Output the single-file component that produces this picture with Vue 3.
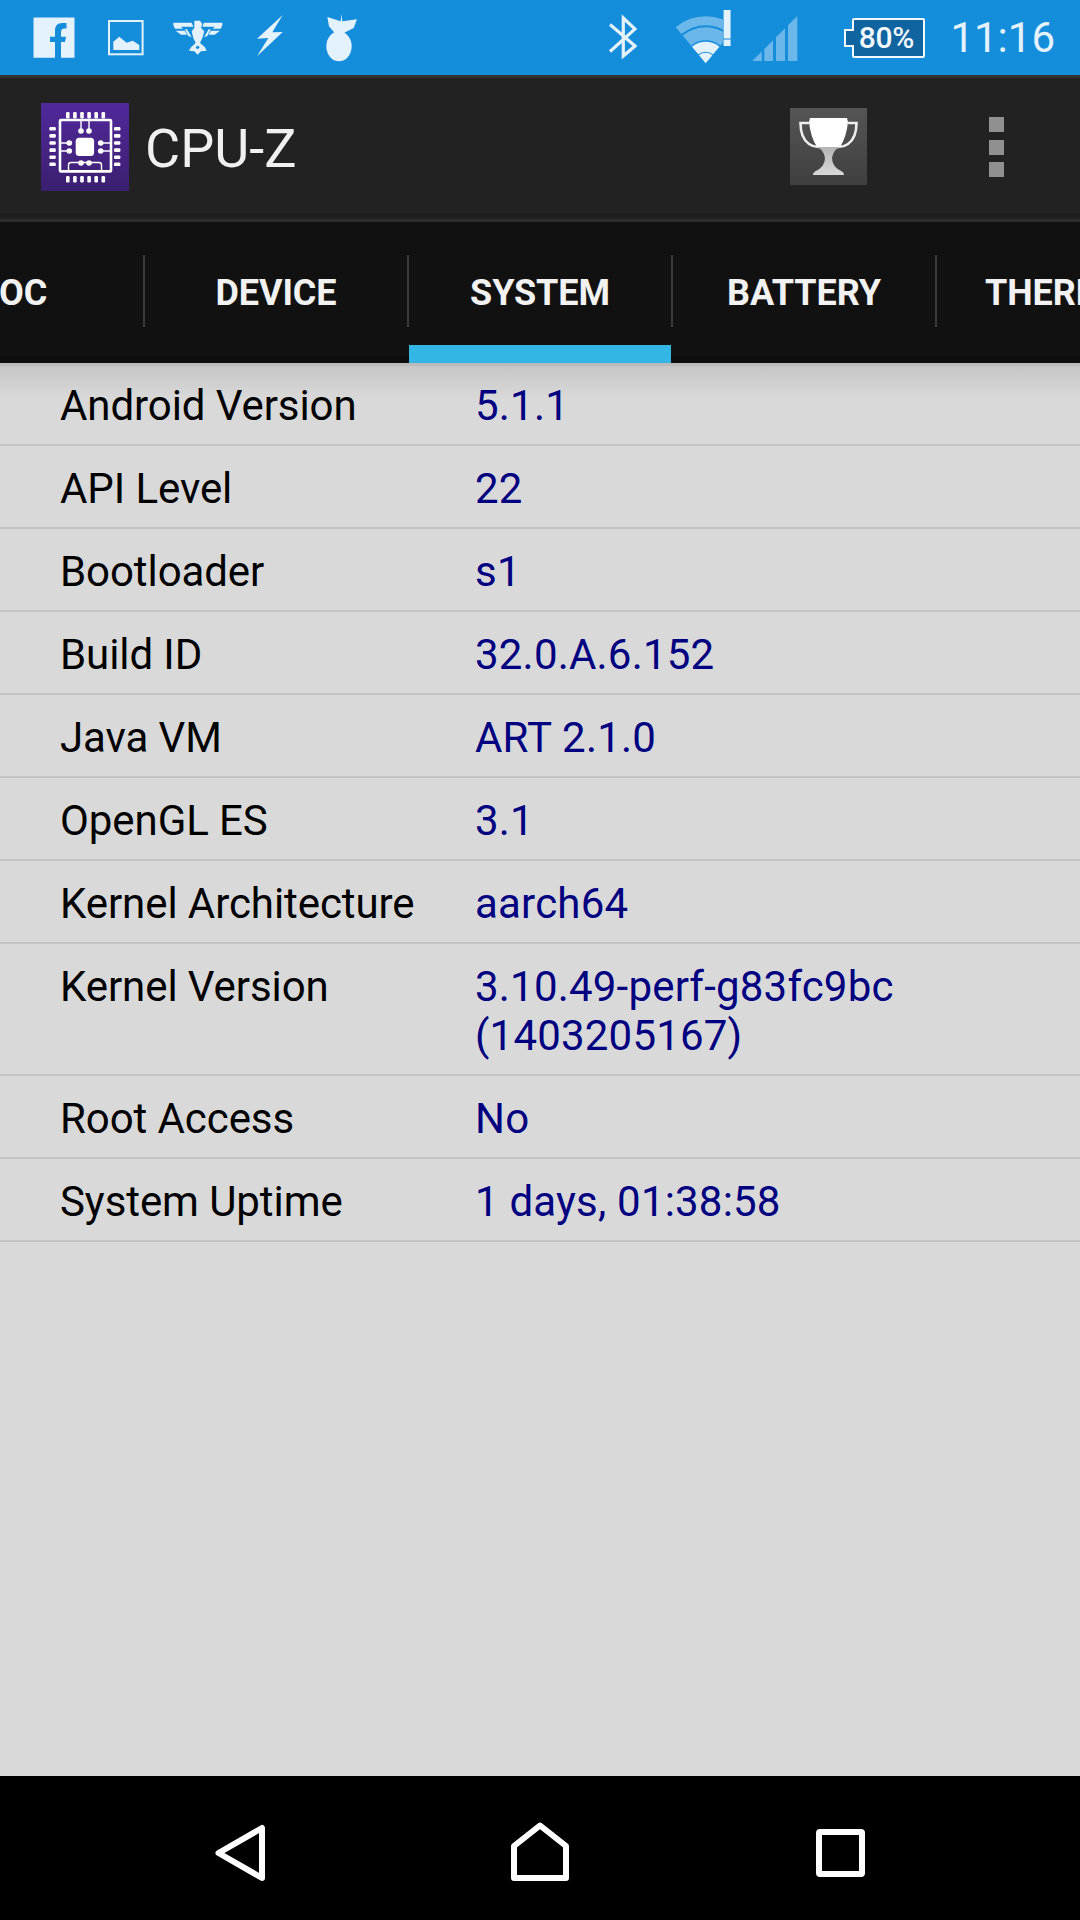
<script setup>
const rows = [
  ['Android Version', '5.1.1'],
  ['API Level', '22'],
  ['Bootloader', 's1'],
  ['Build ID', '32.0.A.6.152'],
  ['Java VM', 'ART 2.1.0'],
  ['OpenGL ES', '3.1'],
  ['Kernel Architecture', 'aarch64'],
  ['Kernel Version', '3.10.49-perf-g83fc9bc (1403205167)'],
  ['Root Access', 'No'],
  ['System Uptime', '1 days, 01:38:58']
]
const tabs = ['SOC', 'DEVICE', 'SYSTEM', 'BATTERY', 'THERMAL']

const cx = 706.7
const cy = 63.3
const half = (39.6 * Math.PI) / 180
function sector(r1, r2) {
  const pt = (r, a) => `${(cx + r * Math.sin(a)).toFixed(2)} ${(cy - r * Math.cos(a)).toFixed(2)}`
  if (r1 === 0) return `M${cx} ${cy}L${pt(r2, -half)}A${r2} ${r2} 0 0 1 ${pt(r2, half)}Z`
  return `M${pt(r1, -half)}L${pt(r2, -half)}A${r2} ${r2} 0 0 1 ${pt(r2, half)}L${pt(r1, half)}A${r1} ${r1} 0 0 0 ${pt(r1, -half)}Z`
}
const wifiDim = [sector(38, 47), sector(23, 36)]
const wifiLit = [sector(11.6, 21.6), sector(0, 10.6)]

const pins = [0, 1, 2, 3, 4, 5]
</script>

<template>
  <div class="phone">
    <div class="status">
      <div class="status-left">
        <svg class="i-fb" viewBox="33 0 42 75"><path fill="#e3f2fd" fill-rule="evenodd" d="M33.5 17.5H74.5V57.7H33.5ZM55 57.7H61V42H65L66 36.7H61V32Q61 28.5 64.5 28.5H66.5V23H62Q55 23 55 31V36.7H50V42H55Z" /></svg>
        <svg class="i-img" viewBox="108 0 36 75"><rect x="109" y="21" width="33.6" height="33.3" fill="none" stroke="#e3f2fd" stroke-width="2" /><path fill="#e3f2fd" d="M113.3 50V41.7L119.3 36.7L126.7 42.7L132.7 40.7L139.3 45V50Z" /></svg>
        <svg class="i-eagle" viewBox="172 0 51 75">
          <g transform="translate(165 8) scale(.33333)" fill="#e3f2fd">
            <path d="M88 38H105L112 48L108 60L118 70L112 90L105 105L120 118L125 128L108 130L98 140L88 130L72 128L78 118L92 105L85 90L80 70L88 60Z" />
            <path d="M25 44H80L85 56H48L54 62H30L25 52ZM32 68H60L66 80H48ZM60 64L66 64L80 88L70 84Z" />
            <path transform="translate(197 0) scale(-1 1)" d="M25 44H80L85 56H48L54 62H30L25 52ZM32 68H60L66 80H48ZM60 64L66 64L80 88L70 84Z" />
            <circle cx="98" cy="118" r="5" fill="#148ddb" />
          </g>
        </svg>
        <svg class="i-bolt" viewBox="256 0 28 75"><path fill="#e3f2fd" d="M282.7 15L257 38.7L268.3 38L257 56.3L282.7 32L272.3 32.3Z" /></svg>
        <svg class="i-bomb" viewBox="326 0 32 75">
          <g transform="translate(165 8) scale(.33333)" fill="#e3f2fd">
            <ellipse cx="522" cy="115" rx="38" ry="45" />
            <path d="M487 27L527 40L529 18L532 40L576 34L566 60L535 76H510L492 55Z" />
          </g>
        </svg>
      </div>
      <div class="status-right">
        <svg class="i-bt" viewBox="610 0 28 75"><path fill="none" stroke="#e3f2fd" stroke-width="3.2" d="M611 24.5L636 46L624.3 56V18L636 29L611 51.5" /></svg>
        <svg class="i-wifi" viewBox="677 0 46.6 75">
          <path v-for="d in wifiDim" :key="d" :d="d" fill="#6bb7ea" />
          <path v-for="d in wifiLit" :key="d" :d="d" fill="#e3f2fd" />
        </svg>
        <svg class="i-excl" viewBox="724 0 8 75"><path fill="#e3f2fd" d="M724.6 10H731.6V38.5H724.6ZM724.6 39.5H731.6V46H724.6Z" /></svg>
        <svg class="i-signal" viewBox="753 0 46 75"><path fill="#6bb7ea" d="M753.3 61L762.7 51.6V61ZM765.3 49L774 40.3V61H765.3ZM777 37.3L786 28.3V61H777ZM789 25.3L798.3 16V61H789Z" /></svg>
        <div class="battery"><span class="battery-nub"></span><span class="battery-text">80%</span></div>
        <span class="clock">11:16</span>
      </div>
    </div>

    <header class="appbar">
      <svg class="logo" viewBox="0 0 88 88">
        <defs>
          <linearGradient id="logoBg" x1="0" y1="0" x2="0" y2="1"><stop offset="0" stop-color="#51299b" /><stop offset="1" stop-color="#3b1f70" /></linearGradient>
        </defs>
        <rect width="88" height="88" fill="url(#logoBg)" />
        <g fill="#fff">
          <template v-for="p in pins" :key="p">
            <rect :x="25 + p * 7.1" y="9" width="3.6" height="6.4" rx="1.2" />
            <rect :x="25 + p * 7.1" y="73" width="3.6" height="6.4" rx="1.2" />
            <rect x="8.4" :y="24 + p * 7.1" width="6.4" height="3.6" rx="1.2" />
            <rect x="73" :y="24 + p * 7.1" width="6.4" height="3.6" rx="1.2" />
          </template>
          <rect x="34.7" y="34.7" width="18.4" height="18.4" rx="3.5" />
          <circle cx="40" cy="28" r="2.8" /><circle cx="48" cy="28" r="2.8" />
          <circle cx="40" cy="60" r="2.8" /><circle cx="48" cy="60" r="2.8" />
          <circle cx="28.3" cy="40" r="2.8" /><circle cx="28.3" cy="48" r="2.8" />
          <circle cx="59.7" cy="40" r="2.8" /><circle cx="59.7" cy="48" r="2.8" />
        </g>
        <g fill="none" stroke="#fff" stroke-width="1.4">
          <path d="M40 17V28M48 17V28M19 40H28M19 48H28M60 40H70M60 48H70" />
          <path d="M27.5 68V62Q27.5 59.5 30 59.5H58Q60.5 59.5 60.5 62V68" />
        </g>
        <rect x="19" y="17" width="51" height="51.4" rx="1" fill="none" stroke="#fff" stroke-width="2.6" />
      </svg>
      <span class="title">CPU-Z</span>
      <svg class="trophy" viewBox="0 0 77 77">
        <defs>
          <linearGradient id="trophyBg" x1="0" y1="0" x2="0" y2="1"><stop offset="0" stop-color="#555" /><stop offset="1" stop-color="#3f3f3f" /></linearGradient>
          <linearGradient id="trophyFoot" x1="0" y1="0" x2="0" y2="1"><stop offset="0" stop-color="#b4b4b4" /><stop offset="1" stop-color="#d8d8d8" /></linearGradient>
        </defs>
        <rect width="77" height="77" fill="url(#trophyBg)" />
        <path fill="none" stroke="#eee" stroke-width="2.6" d="M19 15H10.5Q10.5 30 19 36Q24 39.5 30 39M58 15H66.5Q66.5 30 58 36Q53 39.5 47 39" />
        <path fill="#fff" d="M20 10H57L58 14Q56.5 29 50 39H27Q20.5 29 19 14Z" />
        <path fill="url(#trophyFoot)" d="M27 39H50Q43 42 42 50Q42 59 52 63.5Q54.5 65 54 67H23Q22.5 65 25 63.5Q35 59 35 50Q34 42 27 39Z" />
      </svg>
      <div class="dots"><i></i><i></i><i></i></div>
    </header>

    <nav class="tabs">
      <div v-for="t in tabs" :key="t" class="tab" :class="{ active: t === 'SYSTEM' }">{{ t }}</div>
    </nav>

    <main class="list">
      <div v-for="r in rows" :key="r[0]" class="row">
        <span class="label">{{ r[0] }}</span>
        <span class="value">{{ r[1] }}</span>
      </div>
    </main>

    <footer class="navbar">
      <svg class="n-back" viewBox="212 1776 56 144"><path fill="none" stroke="#fff" stroke-width="6" stroke-linejoin="round" d="M218.5 1853L262 1828V1878Z" /></svg>
      <svg class="n-home" viewBox="508 1776 64 144"><path fill="none" stroke="#fff" stroke-width="6" stroke-linejoin="round" d="M514 1878V1846L540 1825.5L566 1846V1878Z" /></svg>
      <svg class="n-recent" viewBox="812 1776 56 144"><rect x="819" y="1832" width="43" height="42" rx="1" fill="none" stroke="#fff" stroke-width="6" /></svg>
    </footer>
  </div>
</template>

<style scoped>
.phone {
  width: 1080px;
  height: 1920px;
  display: flex;
  flex-direction: column;
  overflow: hidden;
  background: #d9d9d9;
  font-family: Roboto, "Liberation Sans", sans-serif;
}
svg {
  display: block;
  flex: none;
}

/* status bar */
.status {
  height: 75px;
  flex: none;
  display: flex;
  justify-content: space-between;
  background: #148ddb;
}
.status-left,
.status-right {
  display: flex;
  align-items: center;
}
.status-left {
  padding-left: 33px;
}
.status-right {
  padding-right: 25px;
}
.status svg {
  height: 75px;
}
.i-fb { width: 42px; }
.i-img { width: 36px; margin-left: 33px; }
.i-eagle { width: 51px; margin-left: 28px; }
.i-bolt { width: 28px; margin-left: 33px; }
.i-bomb { width: 32px; margin-left: 42px; }
.i-bt { width: 28px; }
.i-wifi { width: 46.6px; margin-left: 39px; }
.i-excl { width: 8px; margin-left: 0.4px; }
.i-signal { width: 46px; margin-left: 21px; }
.battery {
  position: relative;
  box-sizing: border-box;
  width: 73px;
  height: 40px;
  margin-left: 54px;
  display: flex;
  align-items: center;
  justify-content: center;
  padding-left: 1px;
  background: #10649f;
  border: 2px solid #f2f8fd;
  border-radius: 2px;
}
.battery-nub {
  position: absolute;
  left: -10px;
  top: 9px;
  width: 10px;
  height: 18px;
  box-sizing: border-box;
  border: 2px solid #f2f8fd;
  border-right: 0;
  background: #10649f;
}
.battery-text {
  margin-left: -6px;
  font-size: 30px;
  font-weight: 500;
  line-height: 36px;
  letter-spacing: -0.3px;
  color: #f2f8fd;
  white-space: nowrap;
}
.clock {
  margin-left: 25px;
  font-size: 42px;
  line-height: 49px;
  color: #e3f2fd;
}

/* app bar */
.appbar {
  height: 147px;
  flex: none;
  box-sizing: border-box;
  display: flex;
  align-items: flex-start;
  padding: 25px 76px 0 41px;
  border-top: 3px solid #333;
  border-bottom: 3px solid #2d2d2d;
  background: linear-gradient(#222 0 135px, #1f1f1f 135px);
}
.logo {
  width: 88px;
  height: 88px;
}
.title {
  margin-left: 16px;
  margin-top: 14px;
  font-size: 54px;
  line-height: 63px;
  color: #f0f0f0;
}
.trophy {
  width: 77px;
  height: 77px;
  margin-left: auto;
  margin-top: 5px;
}
.dots {
  display: flex;
  flex-direction: column;
  gap: 7.5px;
  margin-left: 122px;
  margin-top: 14px;
}
.dots i {
  display: block;
  width: 15px;
  height: 15px;
  background: #909090;
}

/* tabs */
.tabs {
  height: 141px;
  flex: none;
  display: flex;
  margin-left: -120px;
  width: 1320px;
  background: linear-gradient(#111 0 135px, #0d0d0d 135px);
}
.tab {
  position: relative;
  flex: none;
  width: 264px;
  height: 141px;
  display: flex;
  align-items: center;
  justify-content: center;
  font-size: 36px;
  font-weight: 700;
  letter-spacing: -0.1px;
  color: #f2f2f2;
}
.tab + .tab::before {
  content: "";
  position: absolute;
  left: -1px;
  top: 33px;
  width: 2px;
  height: 72px;
  background: #3a3a3a;
}
.tab.active::after {
  content: "";
  position: absolute;
  left: 1px;
  right: 1px;
  bottom: 0;
  height: 18px;
  background: #33b5e5;
}

/* list */
.list {
  flex: 1;
  background: linear-gradient(#bababa 0 3px, #c6c6c6 3px, #d9d9d9 36px) no-repeat;
  background-color: #d9d9d9;
}
.row {
  display: grid;
  grid-template-columns: 415px 1fr;
  box-sizing: border-box;
  padding: 18px 0 14px 60px;
  border-bottom: 2px solid #c3c3c3;
  font-size: 42px;
  line-height: 49px;
}
.label {
  color: #000;
  letter-spacing: -0.08px;
}
.value {
  color: #000080;
  letter-spacing: 0.2px;
}

/* navigation */
.navbar {
  height: 144px;
  flex: none;
  display: flex;
  gap: 240px;
  padding-left: 212px;
  background: #000;
}
.navbar svg {
  height: 144px;
}
.n-back { width: 56px; }
.n-home { width: 64px; }
.n-recent { width: 56px; }
</style>

<style>
html,
body {
  margin: 0;
  background: #000;
}
</style>
